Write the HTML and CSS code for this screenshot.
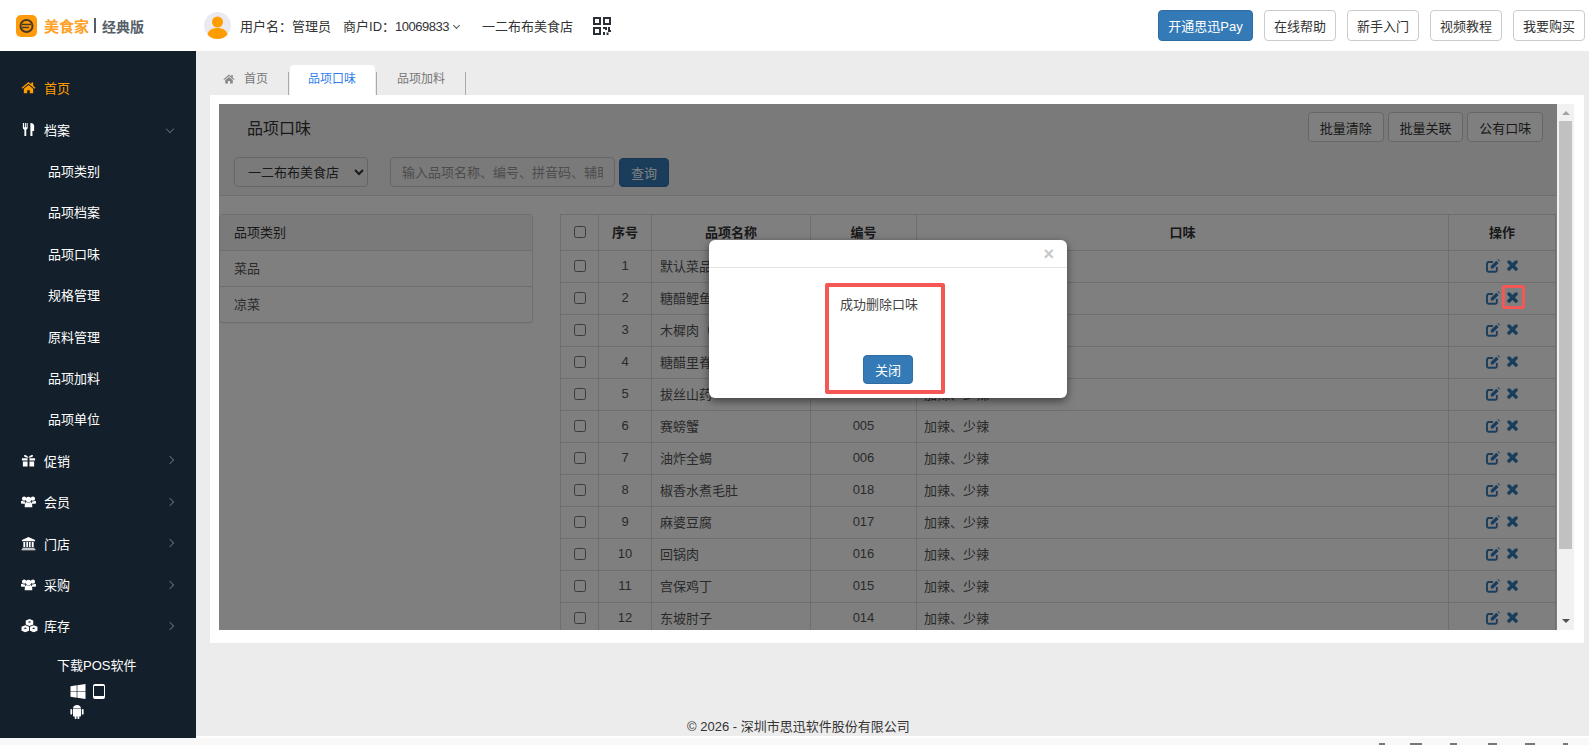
FILE: index.html
```html
<!DOCTYPE html>
<html lang="zh-CN">
<head>
    <meta charset="UTF-8">
    <meta name="viewport" content="width=device-width, initial-scale=1.0">
    <title>品项口味</title>
    <link rel="stylesheet" href="styles.css">
</head>
<body>
    <svg class="icon-sheet" xmlns="http://www.w3.org/2000/svg">
        <symbol id="i-home" viewBox="0 0 16 16"><path d="M8 2 .6 8.200l.9 1L8 3.900l6.500 5.300.9-1-2.400-2V2.600h-2v2z"/><path d="M8 5.200 3 9.300V14h3.600v-3.200h2.800V14H13V9.300z"/></symbol>
        <symbol id="i-cutlery" viewBox="0 0 16 16"><path d="M2 1v5.200c0 1 .7 1.700 1.600 2V15h2V8.200c.9-.3 1.500-1 1.500-2V1H6v4.500H5.200V1H4.100v4.500H3.200V1zM10 1v14h2.200V9.500H14V4c0-1.800-1.500-3-4-3z"/></symbol>
        <symbol id="i-gift" viewBox="0 0 16 16"><path d="M1 5.500h6V8H1zM9 5.500h6V8H9zM2 9h5v5.500H2zM9 9h5v5.500H9z"/><path d="M8 5C6.500 2 3 1.300 3.200 3.300 3.400 4.700 6 5 8 5c2 0 4.600-.3 4.800-1.700C13 1.300 9.500 2 8 5z"/></symbol>
        <symbol id="i-users" viewBox="0 0 16 16"><circle cx="3.300" cy="5" r="2.300"/><circle cx="12.700" cy="5" r="2.300"/><circle cx="8" cy="5.800" r="2.900"/><path d="M0 8.500c0-1 .8-1.200 1.500-1.200.8.700 2 .9 3 .4-.3 1.200-.3 2-.1 2.800H1.200C.5 10.500 0 10 0 9.300zM16 8.500c0-1-.8-1.200-1.500-1.200-.8.700-2 .9-3 .4.300 1.200.3 2 .1 2.800h3.200c.7 0 1.200-.5 1.200-1.200zM4 14c-.3-3.500.6-5.200 1.800-5.500 1.300.9 3 .9 4.400 0 1.200.3 2.100 2 1.800 5.500z"/></symbol>
        <symbol id="i-bank" viewBox="0 0 16 16"><path d="M8 1 1 4.300v1.200h14V4.300zM2.500 6.300h2v5.500h-2zM5.700 6.300h1.800v5.500H5.700zM8.500 6.300h1.800v5.500H8.500zM11.500 6.300h2v5.500h-2zM1.500 12.400h13v1.100h-13zM.6 14h14.800v1.200H.6z"/></symbol>
        <symbol id="i-cubes" viewBox="0 0 18 16"><path fill-rule="evenodd" d="M9 1l4 1.700v4.200l-4 1.700-4-1.700V2.700zM9 3.400 7.200 4.200 9 5l1.800-.8zM4.500 7.700l4 1.700v4.200l-4 1.700-4-1.700V9.400zM4.500 10l-1.800.8 1.800.8 1.800-.8zM13.500 7.700l4 1.700v4.200l-4 1.700-4-1.700V9.400zM13.500 10l-1.800.8 1.800.8 1.800-.8z"/></symbol>
        <symbol id="i-windows" viewBox="0 0 16 16"><path d="M0 2.300 6.600 1.400v6.200H0zM7.300 1.300 16 0v7.600H7.300zM0 8.300h6.600v6.300L0 13.700zM7.300 8.300H16V16l-8.700-1.300z"/></symbol>
        <symbol id="i-android" viewBox="0 0 14 16"><path d="M3 5.500C3.100 3.300 4.700 2 7 2s3.900 1.300 4 3.500zM3 6h8v6.500c0 .6-.4 1-1 1H9.300v1.700a.9.9 0 0 1-1.800 0v-1.700h-1v1.700a.9.9 0 0 1-1.800 0v-1.700H4c-.6 0-1-.4-1-1zM.4 6.800a.9.9 0 0 1 1.800 0v3.900a.9.9 0 0 1-1.800 0zM11.800 6.800a.9.9 0 0 1 1.800 0v3.900a.9.9 0 0 1-1.800 0z"/></symbol>
        <symbol id="i-edit" viewBox="0.600 0.800 12.800 12.800"><path d="M10.500 8v2.800c0 1-.7 1.700-1.700 1.700H3.200c-1 0-1.700-.7-1.700-1.700V5.200c0-1 .7-1.700 1.700-1.700H7" fill="none" stroke="currentColor" stroke-width="1.700"/><path d="M5 9.500V7.300L10 2.300l2.200 2.200L7.200 9.500zM11 1.300l.8-.5 1.500 1.500-.5.800z" fill="currentColor"/></symbol>
        <symbol id="i-times" viewBox="0 0 12 12"><path d="M2.200 2.200l7.600 7.600M9.800 2.200l-7.600 7.600" fill="none" stroke="currentColor" stroke-width="3.800" stroke-linecap="round"/></symbol>
    </svg>

    <div class="topbar">
        <div class="logo">
            <svg class="logo__mark" viewBox="0 0 21 22">
                <rect width="21" height="22" rx="5" fill="#ff9a0a"/>
                <circle cx="10.500" cy="11" r="6" fill="none" stroke="#4a3a22" stroke-width="2"/>
                <path d="M6 9.500h9M6 12.500h7" stroke="#4a3a22" stroke-width="1.300"/>
            </svg>
            <span class="logo__name">美食家</span>
            <span class="logo__bar"></span>
            <span class="logo__edition">经典版</span>
        </div>
        <div class="user">
            <svg class="user__avatar" viewBox="0 0 27 27">
                <circle cx="13.500" cy="13.500" r="13.500" fill="#e9ebf0"/>
                <circle cx="13.500" cy="10" r="5.500" fill="#ff9d00"/>
                <path d="M3.500 22.500c1-4.500 5-6.500 10-6.500s9 2 10 6.500c-2.500 3-6 4.500-10 4.500s-7.500-1.500-10-4.500z" fill="#ff9d00"/>
            </svg>
            <span class="user__name">用户名：管理员</span>
            <span class="user__id">商户ID：<span class="user__num">10069833</span></span>
            <span class="chevron chevron--down chevron--dark"></span>
            <span class="user__shop">一二布布美食店</span>
            <svg class="user__qr" viewBox="0 0 18 18" fill="none" stroke="#2b2f36" stroke-width="2">
                <rect x="1" y="1" width="6" height="6"/>
                <rect x="11" y="1" width="6" height="6"/>
                <rect x="1" y="11" width="6" height="6"/>
                <path d="M10 11h3v2M16 10v4h2M11 15v3M14.500 15.500V18" />
            </svg>
        </div>
        <div class="top-actions">
            <a class="btn btn--primary btn--pay">开通思迅Pay</a>
            <a class="btn btn--top">在线帮助</a>
            <a class="btn btn--top">新手入门</a>
            <a class="btn btn--top">视频教程</a>
            <a class="btn btn--top">我要购买</a>
        </div>
    </div>

    <div class="layout">
        <div class="sidebar">
            <ul class="side-menu">
                <li class="side-menu__item side-menu__item--active"><svg class="side-menu__icon"><use href="#i-home"/></svg>首页</li>
                <li class="side-menu__item"><svg class="side-menu__icon"><use href="#i-cutlery"/></svg>档案<span class="chevron chevron--down"></span></li>
                <li class="side-menu__sub">品项类别</li>
                <li class="side-menu__sub">品项档案</li>
                <li class="side-menu__sub">品项口味</li>
                <li class="side-menu__sub">规格管理</li>
                <li class="side-menu__sub">原料管理</li>
                <li class="side-menu__sub">品项加料</li>
                <li class="side-menu__sub">品项单位</li>
                <li class="side-menu__item"><svg class="side-menu__icon"><use href="#i-gift"/></svg>促销<span class="chevron"></span></li>
                <li class="side-menu__item"><svg class="side-menu__icon"><use href="#i-users"/></svg>会员<span class="chevron"></span></li>
                <li class="side-menu__item"><svg class="side-menu__icon"><use href="#i-bank"/></svg>门店<span class="chevron"></span></li>
                <li class="side-menu__item"><svg class="side-menu__icon"><use href="#i-users"/></svg>采购<span class="chevron"></span></li>
                <li class="side-menu__item"><svg class="side-menu__icon side-menu__icon--wide"><use href="#i-cubes"/></svg>库存<span class="chevron"></span></li>
            </ul>
            <div class="download">
                <div class="download__title">下载POS软件</div>
                <div class="download__icons">
                    <svg class="download__win"><use href="#i-windows"/></svg>
                    <span class="download__tablet"></span>
                    <svg class="download__android"><use href="#i-android"/></svg>
                </div>
            </div>
        </div>

        <div class="main">
            <div class="tabs">
                <div class="tab tab--home"><svg class="tab__icon"><use href="#i-home"/></svg>首页</div>
                <div class="tab tab--active">品项口味</div>
                <div class="tab tab--last">品项加料</div>
            </div>

            <div class="panel">
                <div class="frame">
                    <div class="frame__content">
                        <div class="toolbar">
                            <div class="toolbar__row toolbar__row--title">
                                <div class="toolbar__title">品项口味</div>
                                <div class="toolbar__actions">
                                    <a class="btn btn--tool">批量清除</a>
                                    <a class="btn btn--tool">批量关联</a>
                                    <a class="btn btn--tool">公有口味</a>
                                </div>
                            </div>
                            <div class="toolbar__row">
                                <select class="field field--select"><option>一二布布美食店</option></select>
                                <input class="field field--search" type="text" placeholder="输入品项名称、编号、拼音码、辅助码"/>
                                <a class="btn btn--primary btn--query">查询</a>
                            </div>
                        </div>

                        <div class="split">
                            <div class="category">
                                <div class="category__head">品项类别</div>
                                <div class="category__row">菜品</div>
                                <div class="category__row">凉菜</div>
                            </div>

                            <div class="table-wrap">
                                <table class="grid">
                                    <colgroup>
                                        <col class="grid__col-check">
                                        <col class="grid__col-no">
                                        <col class="grid__col-name">
                                        <col class="grid__col-code">
                                        <col>
                                        <col class="grid__col-op">
                                    </colgroup>
                                    <thead>
                                        <tr><th><input type="checkbox"/></th><th>序号</th><th>品项名称</th><th>编号</th><th>口味</th><th>操作</th></tr>
                                    </thead>
                                    <tbody>
                                        <tr><td class="c"><input type="checkbox"/></td><td class="c">1</td><td class="n">默认菜品</td><td class="c"></td><td></td><td><div class="ops"><svg class="ops__edit"><use href="#i-edit"/></svg><svg class="ops__del"><use href="#i-times"/></svg></div></td></tr>
                                        <tr><td class="c"><input type="checkbox"/></td><td class="c">2</td><td class="n">糖醋鲤鱼</td><td class="c"></td><td></td><td><div class="ops"><svg class="ops__edit"><use href="#i-edit"/></svg><svg class="ops__del"><use href="#i-times"/></svg></div></td></tr>
                                        <tr><td class="c"><input type="checkbox"/></td><td class="c">3</td><td class="n">木樨肉（肉）</td><td class="c"></td><td></td><td><div class="ops"><svg class="ops__edit"><use href="#i-edit"/></svg><svg class="ops__del"><use href="#i-times"/></svg></div></td></tr>
                                        <tr><td class="c"><input type="checkbox"/></td><td class="c">4</td><td class="n">糖醋里脊</td><td class="c"></td><td></td><td><div class="ops"><svg class="ops__edit"><use href="#i-edit"/></svg><svg class="ops__del"><use href="#i-times"/></svg></div></td></tr>
                                        <tr><td class="c"><input type="checkbox"/></td><td class="c">5</td><td class="n">拔丝山药</td><td class="c">004</td><td>加辣、少辣</td><td><div class="ops"><svg class="ops__edit"><use href="#i-edit"/></svg><svg class="ops__del"><use href="#i-times"/></svg></div></td></tr>
                                        <tr><td class="c"><input type="checkbox"/></td><td class="c">6</td><td class="n">赛螃蟹</td><td class="c">005</td><td>加辣、少辣</td><td><div class="ops"><svg class="ops__edit"><use href="#i-edit"/></svg><svg class="ops__del"><use href="#i-times"/></svg></div></td></tr>
                                        <tr><td class="c"><input type="checkbox"/></td><td class="c">7</td><td class="n">油炸全蝎</td><td class="c">006</td><td>加辣、少辣</td><td><div class="ops"><svg class="ops__edit"><use href="#i-edit"/></svg><svg class="ops__del"><use href="#i-times"/></svg></div></td></tr>
                                        <tr><td class="c"><input type="checkbox"/></td><td class="c">8</td><td class="n">椒香水煮毛肚</td><td class="c">018</td><td>加辣、少辣</td><td><div class="ops"><svg class="ops__edit"><use href="#i-edit"/></svg><svg class="ops__del"><use href="#i-times"/></svg></div></td></tr>
                                        <tr><td class="c"><input type="checkbox"/></td><td class="c">9</td><td class="n">麻婆豆腐</td><td class="c">017</td><td>加辣、少辣</td><td><div class="ops"><svg class="ops__edit"><use href="#i-edit"/></svg><svg class="ops__del"><use href="#i-times"/></svg></div></td></tr>
                                        <tr><td class="c"><input type="checkbox"/></td><td class="c">10</td><td class="n">回锅肉</td><td class="c">016</td><td>加辣、少辣</td><td><div class="ops"><svg class="ops__edit"><use href="#i-edit"/></svg><svg class="ops__del"><use href="#i-times"/></svg></div></td></tr>
                                        <tr><td class="c"><input type="checkbox"/></td><td class="c">11</td><td class="n">宫保鸡丁</td><td class="c">015</td><td>加辣、少辣</td><td><div class="ops"><svg class="ops__edit"><use href="#i-edit"/></svg><svg class="ops__del"><use href="#i-times"/></svg></div></td></tr>
                                        <tr><td class="c"><input type="checkbox"/></td><td class="c">12</td><td class="n">东坡肘子</td><td class="c">014</td><td>加辣、少辣</td><td><div class="ops"><svg class="ops__edit"><use href="#i-edit"/></svg><svg class="ops__del"><use href="#i-times"/></svg></div></td></tr>
                                    </tbody>
                                </table>
                            </div>
                        </div>

                        <div class="backdrop"></div>
                        <div class="mark-del"></div>
                        <div class="modal">
                            <div class="modal__head"><span class="modal__close">×</span></div>
                            <div class="modal__note">
                                <div class="modal__text">成功删除口味</div>
                                <a class="btn btn--primary btn--close">关闭</a>
                            </div>
                        </div>
                    </div>
                    <div class="scrollbar">
                        <span class="scrollbar__up"></span>
                        <span class="scrollbar__thumb"></span>
                        <span class="scrollbar__down"></span>
                    </div>
                </div>
            </div>

            <div class="copyright">© 2026 - 深圳市思迅软件股份有限公司</div>
        </div>
    </div>

    <div class="statusbar">
        <span class="statusbar__tick statusbar__tick--a"></span>
        <span class="statusbar__tick statusbar__tick--b"></span>
        <span class="statusbar__tick statusbar__tick--c"></span>
        <span class="statusbar__tick statusbar__tick--d"></span>
        <span class="statusbar__tick statusbar__tick--e"></span>
        <span class="statusbar__tick statusbar__tick--f"></span>
    </div>
</body>
</html>
```

FILE: styles.css
```css
html,
body {
    height: 100%;
    margin: 0;
}

body {
    display: flex;
    flex-direction: column;
    overflow: hidden;
    color: #333;
    font-family: "Liberation Sans", "Noto Sans CJK SC", sans-serif;
    font-size: 13px;
    background: #fff;
}

ul {
    margin: 0;
    padding: 0;
    list-style: none;
}

.icon-sheet {
    display: none;
}

/* buttons */
.btn {
    display: flex;
    align-items: center;
    justify-content: center;
    box-sizing: border-box;
    border: 1px solid #ccc;
    border-radius: 4px;
    color: #333;
    background: #fff;
}

.btn--primary {
    border-color: #2e6da4;
    color: #fff;
    background: #337ab7;
}

.btn--top {
    width: 72px;
    height: 31px;
}

.btn--pay {
    width: 95px;
    height: 31px;
}

.btn--tool {
    width: 75.67px;
    height: 30px;
}

.btn--query {
    width: 50px;
    height: 29px;
    margin-top: 1px;
}

.btn--close {
    width: 50px;
    height: 29px;
    margin-left: 34px;
}

.chevron {
    display: block;
    width: 5px;
    height: 5px;
    margin-left: auto;
    border-top: 1px solid #5d6670;
    border-right: 1px solid #5d6670;
    transform: rotate(45deg);
}

.chevron--down {
    transform: rotate(135deg);
}

.chevron--dark {
    width: 4px;
    height: 4px;
    margin-left: 5px;
    border-color: #555;
}

/* top bar */
.topbar {
    display: flex;
    flex: none;
    align-items: center;
    height: 51px;
    padding: 0 4px 0 16px;
    box-sizing: border-box;
}

.logo {
    display: flex;
    align-items: center;
    width: 188px;
}

.logo__mark {
    width: 21px;
    height: 22px;
}

.logo__name {
    margin-left: 7px;
    color: #ffa027;
    font-size: 15px;
    font-weight: 700;
}

.logo__bar {
    width: 2px;
    height: 15px;
    margin: 0 6px 0 5px;
    background: #555e68;
}

.logo__edition {
    color: #555e68;
    font-size: 14px;
    font-weight: 700;
}

.user {
    display: flex;
    align-items: center;
}

.user__avatar {
    width: 27px;
    height: 27px;
    margin-right: 9px;
}

.user__id {
    margin-left: 12px;
}

.user__num {
    letter-spacing: -0.5px;
}

.user__shop {
    margin-left: 23px;
}

.user__qr {
    width: 18px;
    height: 18px;
    margin-left: 20px;
}

.top-actions {
    display: flex;
    gap: 11px;
    margin-left: auto;
}

/* page body */
.layout {
    display: flex;
    flex: none;
    height: 687px;
}

.sidebar {
    flex: none;
    width: 196px;
    padding-top: 16px;
    box-sizing: border-box;
    color: #fff;
    background: #131f2b;
}

.side-menu__item,
.side-menu__sub {
    display: flex;
    align-items: center;
    height: 41.42px;
    padding-right: 23px;
}

.side-menu__item {
    padding-left: 21px;
}

.side-menu__item--active {
    color: #ff9c00;
}

.side-menu__sub {
    padding-left: 48px;
}

.side-menu__icon {
    width: 15px;
    height: 15px;
    margin-right: 8px;
    fill: currentColor;
}

.side-menu__icon--wide {
    width: 17px;
    height: 15px;
    margin-right: 6px;
}

.download {
    padding: 10px 0 0 57px;
}

.download__title {
    line-height: 18px;
}

.download__icons {
    display: flex;
    flex-wrap: wrap;
    align-items: center;
    width: 40px;
    margin: 9px 0 0 13px;
    row-gap: 4px;
}

.download__win {
    width: 16px;
    height: 15px;
    fill: #fff;
}

.download__tablet {
    display: block;
    width: 12px;
    height: 15px;
    margin-left: 7px;
    box-sizing: border-box;
    border: 1px solid #fff;
    border-top-width: 2px;
    border-bottom-width: 3px;
    border-radius: 2px;
}

.download__android {
    width: 14px;
    height: 16px;
    fill: #fff;
}

.main {
    display: flex;
    flex: 1;
    flex-direction: column;
    min-width: 0;
    background: #ececec;
    border-bottom: 2px solid #fff;
}

.tabs {
    display: flex;
    flex: none;
    align-items: flex-end;
    height: 30px;
    margin: 14px 0 0 14px;
    color: #777;
    font-size: 12px;
    line-height: 14px;
}

.tab {
    height: 23px;
    box-sizing: border-box;
}

.tab--home {
    display: flex;
    align-items: flex-start;
    width: 79px;
    padding-left: 14px;
    border-right: 1px solid #aaa;
}

.tab__icon {
    width: 12px;
    height: 12px;
    margin: 1px 9px 0 -1px;
    fill: #888;
}

.tab--active {
    width: 85px;
    height: 30px;
    margin-left: 1px;
    padding: 7px 0 0 18px;
    border-radius: 4px 4px 0 0;
    color: #2f80ed;
    background: #fff;
}

.tab--last {
    width: 90px;
    padding-left: 20px;
    border-left: 1px solid #aaa;
    border-right: 1px solid #aaa;
    margin-left: 1px;
}

.panel {
    flex: none;
    height: 548px;
    margin: 0 5px 0 14px;
    padding: 9px 10px 13px 9px;
    box-sizing: border-box;
    background: #fff;
}

.frame {
    display: flex;
    height: 100%;
}

.frame__content {
    position: relative;
    flex: 1;
    min-width: 0;
    overflow: hidden;
}

.scrollbar {
    display: flex;
    flex: none;
    flex-direction: column;
    align-items: center;
    width: 17px;
    background: #f1f1f1;
}

.scrollbar__up,
.scrollbar__down {
    display: block;
    flex: none;
    width: 0;
    height: 0;
    border-left: 4px solid transparent;
    border-right: 4px solid transparent;
}

.scrollbar__up {
    margin: 7px 0 6px;
    border-bottom: 4px solid #a3a3a3;
}

.scrollbar__down {
    margin: auto 0 7px;
    border-top: 4px solid #505050;
}

.scrollbar__thumb {
    display: block;
    flex: none;
    width: 13px;
    height: 428px;
    background: #c1c1c1;
}

/* frame content */
.toolbar {
    padding: 8px 14px 8px 15px;
    border-bottom: 1px solid #ddd;
    background: #f5f5f5;
}

.toolbar__row {
    display: flex;
    gap: 4px;
}

.toolbar__row--title {
    align-items: center;
    margin-bottom: 15px;
}

.toolbar__title {
    margin-left: 13px;
    font-size: 16px;
}

.toolbar__actions {
    display: flex;
    gap: 4px;
    margin-left: auto;
}

.field {
    height: 30px;
    box-sizing: border-box;
    border: 1px solid #ccc;
    border-radius: 4px;
    color: #333;
    font-family: inherit;
    font-size: 13px;
    background: transparent;
}

.field--select {
    width: 134px;
    margin-right: 18px;
    padding-left: 9px;
}

.field--search {
    width: 225px;
    padding: 0 11px;
    background: #f5f5f5;
}

.field--search::placeholder {
    color: #999;
}

.split {
    display: flex;
    gap: 27px;
    align-items: flex-start;
    padding-top: 18px;
}

.category {
    flex: none;
    width: 314px;
    box-sizing: border-box;
    border: 1px solid #ddd;
    border-radius: 3px;
    box-shadow: 0 1px 1px rgba(0, 0, 0, 0.05);
}

.category__head,
.category__row {
    display: flex;
    align-items: center;
    box-sizing: border-box;
    height: 35px;
    padding-left: 14px;
    color: #555;
}

.category__head {
    padding-bottom: 2px;
    color: #333;
    background: #f5f5f5;
}

.category__row {
    height: 36px;
    padding-bottom: 3px;
    border-top: 1px solid #ddd;
}

.table-wrap {
    flex: none;
    width: 996px;
    border-radius: 3px;
}

.grid {
    width: 100%;
    table-layout: fixed;
    border-collapse: collapse;
    background: #fff;
}

.grid__col-check {
    width: 38px;
}

.grid__col-no {
    width: 53px;
}

.grid__col-name {
    width: 159px;
}

.grid__col-code {
    width: 106px;
}

.grid__col-op {
    width: 107px;
}

.grid th,
.grid td {
    padding: 0;
    border: 1px solid #ddd;
}

.grid th {
    height: 36px;
    padding-bottom: 2px;
    box-sizing: border-box;
    font-weight: 700;
}

.grid td {
    height: 32px;
    padding: 0 0 2px 7px;
    box-sizing: border-box;
    color: #555;
}

.grid td.c {
    padding-left: 0;
    text-align: center;
}

.grid td.n {
    padding-left: 8px;
}

.grid input {
    display: block;
    width: 12px;
    height: 12px;
    margin: 0 auto;
}

.ops {
    display: flex;
    gap: 7px;
    justify-content: center;
    margin-left: -7px;
    color: #337ab7;
}

.ops__edit {
    width: 14px;
    height: 14px;
}

.ops__del {
    width: 11px;
    height: 11px;
    margin-top: 1px;
}

/* dialog */
.backdrop {
    position: absolute;
    top: 0;
    right: 0;
    bottom: 0;
    left: 0;
    background: rgba(0, 0, 0, 0.5);
}

.mark-del {
    position: absolute;
    top: 181px;
    left: 1283px;
    width: 23px;
    height: 24px;
    box-sizing: border-box;
    border: 3px solid #f55656;
    border-radius: 2px;
}

.modal {
    position: absolute;
    top: 136px;
    left: 490px;
    width: 358px;
    height: 158px;
    border-radius: 6px;
    background: #fff;
    box-shadow: 0 3px 9px rgba(0, 0, 0, 0.5);
}

.modal__head {
    display: flex;
    justify-content: flex-end;
    height: 27px;
    padding-right: 13px;
    border-bottom: 1px solid #e5e5e5;
}

.modal__close {
    color: #c8c8c8;
    font-size: 18px;
    font-weight: 700;
    line-height: 29px;
}

.modal__note {
    width: 120px;
    height: 111px;
    margin: 15px 0 0 116px;
    padding-top: 8px;
    box-sizing: border-box;
    border: 4px solid #f55656;
    border-radius: 2px;
}

.modal__text {
    height: 60px;
    padding-left: 11px;
    line-height: 20px;
    color: #444;
}

.copyright {
    margin-top: auto;
    padding-left: 491px;
    line-height: 18px;
    color: #333;
}

.statusbar {
    display: flex;
    flex: 1;
    align-items: flex-start;
    padding: 5px 0 0 1379px;
    box-sizing: border-box;
    background: #f8f8f8;
}

.statusbar__tick {
    display: block;
    height: 2px;
    background: #777;
}

.statusbar__tick--a {
    width: 6px;
}

.statusbar__tick--b {
    width: 12px;
    margin-left: 25px;
}

.statusbar__tick--c {
    width: 7px;
    margin-left: 28px;
}

.statusbar__tick--d {
    width: 9px;
    margin-left: 31px;
}

.statusbar__tick--e {
    width: 10px;
    margin-left: 28px;
}

.statusbar__tick--f {
    width: 5px;
    margin-left: 28px;
}
```
